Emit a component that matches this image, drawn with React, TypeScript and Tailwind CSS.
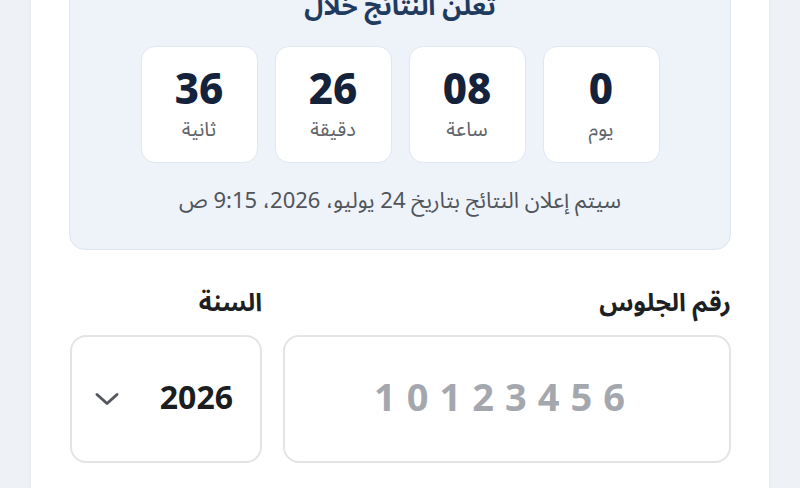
import React from 'react';

const units = [
  { value: '0', label: 'يوم' },
  { value: '08', label: 'ساعة' },
  { value: '26', label: 'دقيقة' },
  { value: '36', label: 'ثانية' },
];

const font = { fontFamily: '"Noto Sans Arabic", "DejaVu Sans", "Noto Sans", sans-serif' };

function Chevron() {
  return (
    <svg width="26" height="16" viewBox="0 0 26 16" fill="none" className="text-[#55585e]">
      <path d="M3 3.5 13 12.5 23 3.5" stroke="currentColor" strokeWidth="3" strokeLinecap="round" strokeLinejoin="round" />
    </svg>
  );
}

export default function App() {
  return (
    <div dir="rtl" style={font} className="h-[488px] w-[800px] overflow-hidden bg-[#eef1f5] px-[31px]">
      <div className="-mt-[40px] h-[540px] bg-white px-[38px] shadow-[0_0_6px_rgba(0,0,0,0.04)]">
        {/* Countdown panel */}
        <section className="rounded-[16px] border border-[#dfe6f0] bg-[#eef2f9] pt-[29px] pb-[34px]">
          <h2 className="text-center text-[26px] font-bold leading-[34px] text-[#1f3b60]">تعلن النتائج خلال</h2>

          <div className="mt-[22px] flex justify-center gap-[17px]">
            {units.map((u) => (
              <div
                key={u.label}
                className="flex h-[117px] w-[117px] flex-col items-center justify-center rounded-[14px] border border-[#e1e7f0] bg-white"
              >
                <span className="mt-[2px] text-[42px] font-extrabold leading-[48px] text-[#14223c]">{u.value}</span>
                <span className="text-[20px] leading-[30px] text-[#5f646b]">{u.label}</span>
              </div>
            ))}
          </div>

          <p className="mt-[24px] text-center text-[22px] leading-[28px] text-[#50555c]">
            سيتم إعلان النتائج بتاريخ 24 يوليو، 2026، 9:15 ص
          </p>
        </section>

        {/* Lookup form */}
        <div className="mt-[37px] flex gap-[21px]">
          <div className="w-[448px]">
            <label className="block text-[25px] font-bold leading-[32px] text-[#1e1f22]">رقم الجلوس</label>
            <div className="mt-[16px] flex h-[128px] items-center rounded-[16px] border-2 border-[#e3e4e6] bg-white pr-[93px]">
              <span dir="ltr" className="text-[38px] font-bold tracking-[0.29em] text-[#a4a8ae]">10123456</span>
            </div>
          </div>

          <div className="w-[192px]">
            <label className="block text-[25px] font-bold leading-[32px] text-[#1e1f22]">السنة</label>
            <div className="mt-[16px] flex h-[128px] items-center justify-between rounded-[16px] border-2 border-[#e3e4e6] bg-white pr-[27px] pl-[22px]">
              <span className="text-[32px] font-bold text-[#1c1d20]">2026</span>
              <Chevron />
            </div>
          </div>
        </div>
      </div>
    </div>
  );
}
